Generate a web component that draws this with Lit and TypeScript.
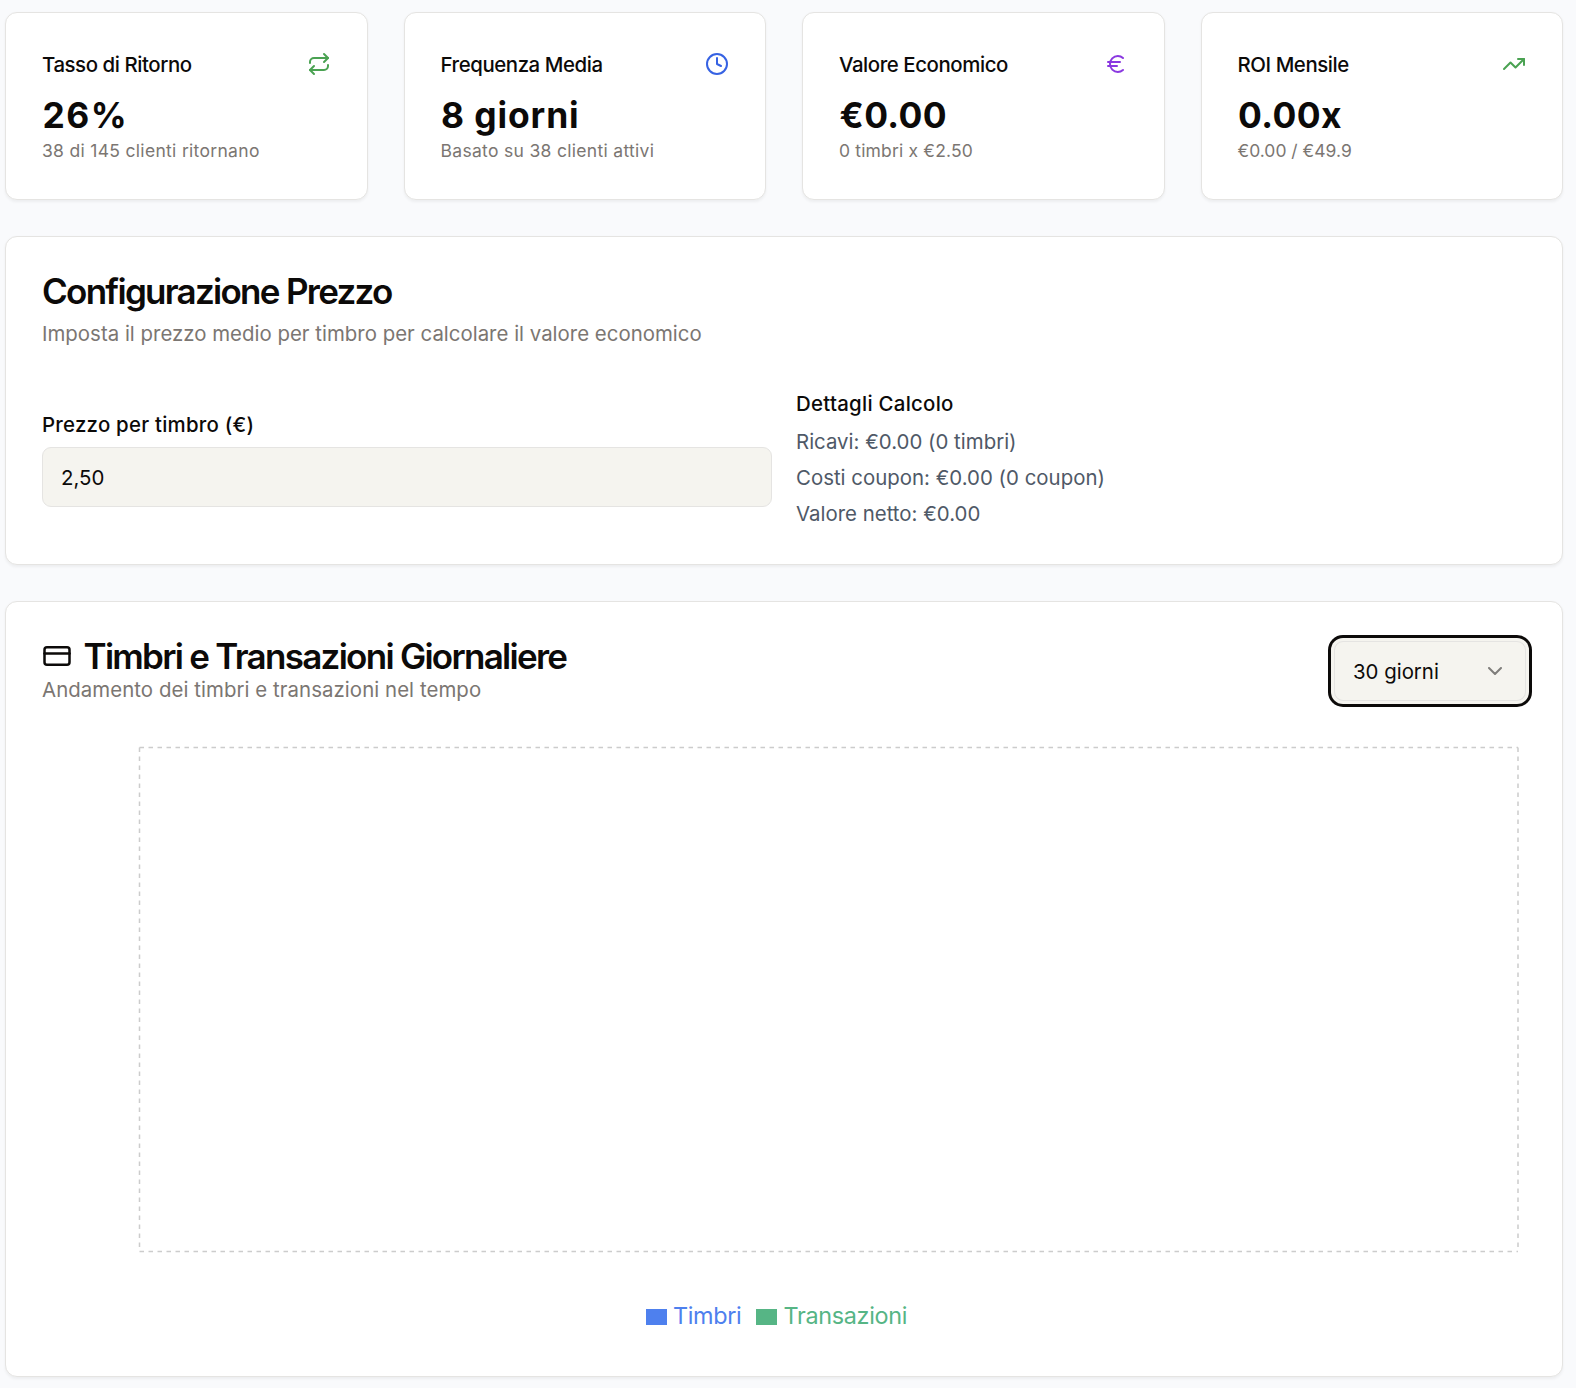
import { LitElement, html, css, svg, TemplateResult } from "lit";
import { customElement, property } from "lit/decorators.js";

type IconName = "repeat" | "clock" | "euro" | "trending" | "card" | "chevron";

const ICONS: Record<IconName, TemplateResult> = {
  repeat: svg`<path d="m17 2 4 4-4 4"/><path d="M3 11v-1a4 4 0 0 1 4-4h14"/><path d="m7 22-4-4 4-4"/><path d="M21 13v1a4 4 0 0 1-4 4H3"/>`,
  clock: svg`<circle cx="12" cy="12" r="10"/><path d="M12 6v6l4 2"/>`,
  euro: svg`<path d="M4 10h12"/><path d="M4 14h9"/><path d="M19 6a7.7 7.7 0 0 0-5.2-2A7.9 7.9 0 0 0 6 12c0 4.4 3.5 8 7.8 8 2 0 3.8-.8 5.2-2"/>`,
  trending: svg`<path d="M22 7 13.5 15.5 8.5 10.5 2 17"/><path d="M16 7h6v6"/>`,
  card: svg`<rect width="20" height="14" x="2" y="5" rx="2"/><path d="M2 10h20"/>`,
  chevron: svg`<path d="m6 9 6 6 6-6"/>`,
};

@customElement("line-icon")
export class LineIcon extends LitElement {
  @property() name: IconName = "clock";

  static styles = css`
    :host { display: block; width: 24px; height: 24px; flex: none; }
    .icon { display: block; width: 100%; height: 100%; fill: none; stroke: currentColor; stroke-width: 2; stroke-linecap: round; stroke-linejoin: round; }
  `;

  render() {
    return html`<svg class="icon" viewBox="0 0 24 24" aria-hidden="true">${ICONS[this.name]}</svg>`;
  }
}

const STATS: { title: string; value: string; note: string; icon: IconName; tone: string }[] = [
  { title: "Tasso di Ritorno", value: "26%", note: "38 di 145 clienti ritornano", icon: "repeat", tone: "green" },
  { title: "Frequenza Media", value: "8 giorni", note: "Basato su 38 clienti attivi", icon: "clock", tone: "blue" },
  { title: "Valore Economico", value: "€0.00", note: "0 timbri x €2.50", icon: "euro", tone: "purple" },
  { title: "ROI Mensile", value: "0.00x", note: "€0.00 / €49.9", icon: "trending", tone: "green" },
];

@customElement("app-root")
export class AppRoot extends LitElement {
  static styles = css`
    :host { display: block; font-family: Inter, "Liberation Sans", sans-serif; color: #0c0a09; }
    * { box-sizing: border-box; margin: 0; }
    .page { min-height: 1388px; padding: 12px 13px 11px 5px; background: #f9fafc; display: flex; flex-direction: column; gap: 36px; font-size: 20.4px; }
    .panel { background: #fff; border: 1px solid #e5e4e2; border-radius: 12px; padding: 36px; box-shadow: 0 1.5px 3px rgba(0, 0, 0, 0.05); }

    .stats { display: grid; grid-template-columns: repeat(4, 1fr); gap: 36px; }
    .stat-head { display: flex; align-items: center; justify-content: space-between; height: 30px; margin-bottom: 12px; }
    .stat-title { font-size: 20.4px; font-weight: 500; line-height: 30px; padding-top: 2px; letter-spacing: -0.42px; }
    .value { font-size: 35.4px; font-weight: 700; line-height: 48px; padding: 1px 0 0 0.5px; margin-bottom: -1px; letter-spacing: 0.4px; }
    .stat:nth-child(1) .value { letter-spacing: 1.5px; }
    .stat:nth-child(2) .value { letter-spacing: 0.9px; }
    .note { font-size: 17.5px; line-height: 24px; letter-spacing: 0.31px; color: #7b7672; }
    .stat:nth-child(3) .note { letter-spacing: 0.17px; }
    .stat:nth-child(4) .note { letter-spacing: 0; }
    .green { color: #4aa252; }
    .blue { color: #3662e3; }
    .purple { color: #8a38e0; }

    .heading { font-size: 35px; font-weight: 600; line-height: 36px; letter-spacing: -1.72px; white-space: nowrap; }
    .sub { line-height: 30px; padding-top: 1px; margin-bottom: -1px; color: #7b7672; letter-spacing: 0.015px; }
    .chart-head .sub { letter-spacing: 0.065px; }
    .config .sub { margin-top: 9px; }
    .config-grid { display: grid; grid-template-columns: 1fr 1fr; gap: 24px; align-items: center; margin-top: 36px; }
    .label { font-weight: 500; line-height: 40px; margin-bottom: 2px; letter-spacing: 0.24px; }
    .details { height: 144px; }
    .details .label { margin-bottom: 3px; letter-spacing: 0.28px; }
    .input { height: 60px; display: flex; align-items: center; padding: 0 18px; background: #f5f4ef; border: 1px solid #e5e4e2; border-radius: 9px; }
    .detail { line-height: 30px; color: #4f5967; letter-spacing: 0.015px; }
    .detail + .detail { margin-top: 6px; }

    .chart-head { display: flex; align-items: center; justify-content: space-between; height: 66px; margin-bottom: 36px; }
    .heading-row { display: flex; align-items: center; gap: 11.5px; }
    .card-icon { width: 30px; height: 30px; }
    .select { width: 192px; height: 60px; display: flex; align-items: center; justify-content: space-between; padding: 0 18px; background: #f5f4ef; border: 1px solid #e5e4e2; border-radius: 9px; box-shadow: 0 0 0 3px #f5f4ef, 0 0 0 6px #0c0a09; }
    .chevron { opacity: 0.5; }
    .plot { display: block; width: 1484px; height: 558px; }
    .grid-line { stroke: #ccc; stroke-width: 1.5; stroke-dasharray: 4.5 4.5; fill: none; }
    .legend { display: flex; justify-content: center; height: 42px; font-size: 23.4px; line-height: 36px; letter-spacing: -0.32px; }
    .legend-item { display: flex; gap: 6px; margin-right: 15px; }
    .swatch { width: 21px; height: 16px; margin-top: 11px; background: currentColor; }
    .timbri { color: #4e80ee; }
    .transazioni { color: #56b585; }
  `;

  render() {
    return html`
      <main class="page">
        <section class="stats">
          ${STATS.map(
            (s) => html`
              <article class="panel stat">
                <div class="stat-head">
                  <h3 class="stat-title">${s.title}</h3>
                  <line-icon class=${s.tone} name=${s.icon}></line-icon>
                </div>
                <div class="value">${s.value}</div>
                <p class="note">${s.note}</p>
              </article>
            `,
          )}
        </section>

        <section class="panel config">
          <h2 class="heading">Configurazione Prezzo</h2>
          <p class="sub">Imposta il prezzo medio per timbro per calcolare il valore economico</p>
          <div class="config-grid">
            <div>
              <div class="label">Prezzo per timbro (€)</div>
              <div class="input">2,50</div>
            </div>
            <div class="details">
              <div class="label">Dettagli Calcolo</div>
              <p class="detail">Ricavi: €0.00 (0 timbri)</p>
              <p class="detail">Costi coupon: €0.00 (0 coupon)</p>
              <p class="detail">Valore netto: €0.00</p>
            </div>
          </div>
        </section>

        <section class="panel">
          <div class="chart-head">
            <div>
              <div class="heading-row">
                <line-icon class="card-icon" name="card"></line-icon>
                <h2 class="heading">Timbri e Transazioni Giornaliere</h2>
              </div>
              <p class="sub">Andamento dei timbri e transazioni nel tempo</p>
            </div>
            <div class="select">
              <span>30 giorni</span>
              <line-icon class="chevron" name="chevron"></line-icon>
            </div>
          </div>
          <svg class="plot" viewBox="0 0 1484 558">
            <path class="grid-line" d="M97.5 7.5H1476" />
            <path class="grid-line" d="M97.5 511.5H1476" />
            <path class="grid-line" d="M97.5 7.5V511.5" />
            <path class="grid-line" d="M1476 7.5V511.5" />
          </svg>
          <div class="legend">
            <div class="legend-item timbri"><span class="swatch"></span>Timbri</div>
            <div class="legend-item transazioni"><span class="swatch"></span>Transazioni</div>
          </div>
        </section>
      </main>
    `;
  }
}
